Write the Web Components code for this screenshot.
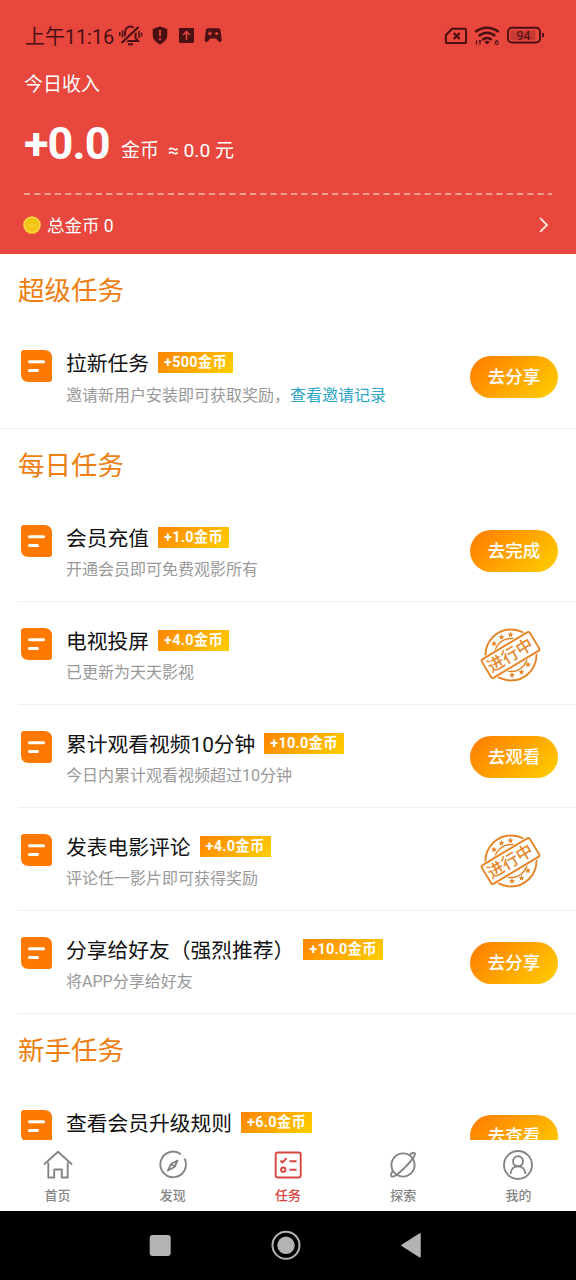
<!DOCTYPE html>
<html lang="zh-CN">
<head>
<meta charset="utf-8">
<title>任务</title>
<style>
html,body{margin:0;height:1280px;overflow:hidden;background:#fff}
body{font-family:Roboto,"Noto Sans CJK SC",sans-serif}
</style>
</head>
<body>
<task-app></task-app>
<script>
const define = (name, render) => customElements.define(name, class extends HTMLElement {
  connectedCallback() {
    if (this.shadowRoot) return;
    const t = document.createElement('template');
    t.innerHTML = render(this);
    this.attachShadow({ mode: 'open' }).append(t.content.cloneNode(true));
  }
});

define('status-bar', () => `
<style>
:host{display:flex;box-sizing:border-box;height:62px;padding:11px 31px 0 25px;color:#4a1013;font-size:20px;justify-content:space-between}
div{display:flex;align-items:center;height:50px}
span{line-height:50px;width:94px;white-space:nowrap;padding-top:2px;letter-spacing:-.1px}
svg{display:block;flex:none}
</style>
<div><span>上午11:16</span>
<svg width="106" height="24" viewBox="119 24 106 24" fill="none" stroke="currentColor" stroke-width="2">
<path d="M124 41h14l-2.5-3v-5c0-3.600-2-6.500-5-6.500s-5.500 2.500-5.500 6.500v5z"/>
<path d="M121 43.500 139 26" stroke="#e8473d" stroke-width="5"/><path d="M121.500 43 138.500 27" stroke-width="2.200"/>
<path d="M128 44.300h5" stroke-width="2"/><path d="M119.800 32v4M122.500 30.500v7M139 31v7M141.500 32.500v4" stroke-width="1.500"/>
<path d="M160 26.200l7.300 2.700v5.500c0 5-3.200 8-7.300 10-4.100-2-7.300-5-7.300-10v-5.500z" fill="currentColor" stroke="none"/><path d="M160 30v6.200M160 38v2.200" stroke="#e8473d" stroke-width="1.700"/>
<rect x="179" y="28" width="15" height="15" rx="1" fill="currentColor" stroke="none"/><path d="M186.500 40v-8.500M183 35l3.500-3.500 3.500 3.500" stroke="#e8473d" stroke-width="1.500"/>
<path d="M208 28.200h10.500q1.700 0 2 1.700l1.200 9.500c.3 2.500-2 3-3 2l-2.700-2.900h-5.600l-2.700 2.900c-1 1-3.300.5-3-2l1.200-9.500q.3-1.700 2.100-1.700z" fill="currentColor" stroke="none"/><path d="M208 33.500h4M210 31.500v4" stroke="#e8473d" stroke-width="1.300"/><circle cx="216.700" cy="33.500" r="1.600" fill="#e8473d" stroke="none"/>
</svg></div>
<div><svg width="102" height="24" viewBox="443 24 102 24" fill="none" stroke="currentColor" stroke-width="2">
<path d="M452 28.800h12.500q1.600 0 1.600 1.600v11q0 1.600-1.600 1.600h-17q-1.600 0-1.600-1.600v-6.200z"/><path d="M453.700 33l6 6M459.700 33l-6 6" stroke-width="2.300"/>
<path d="M475.300 32c7-5.800 16.400-5.800 23.400 0M478.800 36c5-4.300 11.400-4.300 16.400 0M482.300 39.800c3-2.400 6.400-2.400 9.400 0" stroke-width="2.500"/><path d="M484.300 41.700q2.700-1.800 5.400 0l-2.700 2.800z" fill="currentColor" stroke="none"/><path d="M476.500 44.500v-4M480 40v4.500M478.500 41h3" stroke-width="1.200"/>
<text x="494.300" y="45" fill="currentColor" stroke="none" font-size="8" font-weight="700">6</text>
<rect x="508" y="27.800" width="32" height="14.700" rx="4" stroke-width="1.900"/><rect x="510.500" y="30.500" width="25" height="9.500" rx="1" fill="#b5322e" stroke="none" opacity=".65"/><path d="M543 33v4" stroke-width="2"/>
<text x="516.500" y="40" fill="currentColor" stroke="none" font-size="12.500">94</text>
</svg></div>`);

define('income-header', () => `
<style>
:host{display:block;height:254px;background:#e8473d;color:#fff}
.body{padding:8px 24px 0}
.label{font-size:19px;line-height:30px;height:30px}
.amount{display:flex;align-items:baseline;height:66px;margin-top:12px;white-space:nowrap}
.amount b{font-size:45px;line-height:64px;width:97px;letter-spacing:-.9px}
.amount span,.amount i{font-size:19px;transform:translateY(-2px)}
.amount span{width:47px}
.amount i{font-style:normal;font-size:19.200px}
svg{display:block}
.dash{margin-top:15px}
.total{display:flex;align-items:center;height:30px;margin:14.500px 0 0 -1px;font-size:17.500px;gap:6px}
.total span{flex:1}
.arrow{margin-right:3px}
</style>
<status-bar></status-bar>
<div class="body">
<div class="label">今日收入</div>
<div class="amount"><b>+0.0</b><span>金币</span><i>≈ 0.0 元</i></div>
<svg class="dash" width="528" height="2"><path d="M0 1h528" stroke="#f8bcae" stroke-width="1.500" stroke-dasharray="6.200 4.070"/></svg>
<div class="total"><svg width="18" height="18"><circle cx="9" cy="9" r="8.800" fill="#fbd13c"/><circle cx="9" cy="9" r="6.300" fill="#f3c514" stroke="#e0b21c" stroke-width=".8" stroke-dasharray="1.500 1"/><path d="M6 8l3 3 3-3" fill="none" stroke="#f9d84c"/></svg><span>总金币 0</span>
<svg class="arrow" width="10" height="16" fill="none" stroke="#ffe9e4" stroke-width="1.800"><path d="M1.200 1.200 8 8l-6.800 6.800"/></svg></div>
</div>`);

define('task-section', el => `
<style>
:host{display:block}
h2{box-sizing:border-box;margin:0;padding:1.500px 0 0 18px;height:70px;line-height:70px;font-size:26.500px;font-weight:400;color:#ef7e11}
</style>
<h2>${el.getAttribute('heading')}</h2><slot></slot>`);

define('reward-badge', () => `
<style>
:host{display:block;box-sizing:border-box;height:21px;line-height:22px;padding:0 6px;background:linear-gradient(135deg,#ff8400,#ffcf00);color:#fff;font-size:14.400px;font-weight:700;letter-spacing:.3px;white-space:nowrap}
</style><slot></slot>`);

define('pill-button', () => `
<style>
:host{display:block;width:88px;height:42px;line-height:43px;border-radius:21px;background:linear-gradient(135deg,#ff7a00,#ffcf00);color:#fff;font-size:17.500px;font-weight:500;text-align:center}
</style><slot></slot>`);

define('progress-stamp', () => `
<style>:host{display:block;width:60px;height:56px;margin-right:17px}svg{display:block;overflow:visible}</style>
<svg width="60" height="56" viewBox="-30 -28 60 56" fill="none" stroke="#e58528">
<circle r="25.500" stroke-width="1.900"/><circle r="16.500" stroke-width="1.500"/>
${[[-17,-11.500],[-9.500,-18],[-.5,-20.500],[17,9.500],[10.500,17],[1,20]].map(([x,y]) => `<path transform="translate(${x} ${y}) scale(.85)" fill="#e58528" stroke="none" d="M0-3.500 1-1.100 3.500-1 1.600.700 2.200 3.200 0 1.800-2.200 3.200-1.600.700-3.500-1-1-1.100z"/>`).join('')}
<g transform="translate(-.5 0) rotate(-31)"><rect x="-29" y="-12.500" width="58" height="25" fill="#fff" stroke="none"/><rect x="-28" y="-10.800" width="56" height="21.600" rx="2" fill="#fff" stroke-width="1.900"/>
<text x="-.5" y="5.800" text-anchor="middle" font-size="16.500" font-weight="500" fill="#e58528" stroke="none">进行中</text></g>
</svg>`);

define('task-row', el => `
<style>
:host{display:flex;box-sizing:border-box;height:103px;margin-left:18px;padding:0 18px 0 3px;border-bottom:1px solid #efefef}
:host([full]){height:105px;margin-left:0;padding-left:21px}
.icon{display:block;margin-top:26px;flex:none}
.text{flex:1;padding-left:14px}
.title{display:flex;align-items:center;height:30px;margin-top:24.500px;gap:9px;font-size:20.750px;line-height:30px;color:#111;white-space:nowrap}
.sub{font-size:16px;line-height:24px;margin-top:4px;color:#999;white-space:nowrap}
:host([full]) .sub{margin-top:5px}
.action{margin-top:31px}
:host([full]) .action{margin-top:32px}
reward-badge{margin-top:-3px}
progress-stamp{margin-top:-6.500px}
</style>
<svg class="icon" width="31" height="32"><path d="M3 0H23Q31 0 31 8V29Q31 32 28 32H8Q0 32 0 24V3Q0 0 3 0Z" fill="#ff7800"/><path d="M8.500 11.700h14M8.500 20.500h8" stroke="#fff" stroke-width="3" stroke-linecap="round"/></svg>
<div class="text"><div class="title"><span>${el.getAttribute('name')}</span><reward-badge>${el.getAttribute('reward')}金币</reward-badge></div><div class="sub"><slot></slot></div></div>
<div class="action">${el.hasAttribute('action') ? `<pill-button>${el.getAttribute('action')}</pill-button>` : '<progress-stamp></progress-stamp>'}</div>`);

const navIcons = {
  home: '<path d="M2 15.500 16 2.800l14 12.700M6.300 13.500v15h5.900v-8h7.600v8h5.900v-15"/>',
  compass: '<path d="M24 5.300A12.800 12.800 0 1 0 27.500 9.500M25.700 6.900l.3.300"/><path d="M20.500 11.500 17.500 18l-6.500 3.500 3-6.500zM14.500 15.500l3 2"/>',
  tasks: '<rect x="3.700" y="3.500" width="25" height="25" rx="2"/><path d="M8.500 11.500l2 2 4-4.300M17.500 12.300h7M17.500 20.700h7"/><circle cx="11.300" cy="20.700" r="2.200"/>',
  planet: '<circle cx="16" cy="16" r="11.600"/><path d="M22 6.200c2.500-2.200 5-2.900 5.500-2.300.9.900.2 2.700-1 4.500-2.300 3.500-6 7.500-9.300 10.800-4 3.800-10.700 9.600-12.600 8.300-1-.9-.3-3.300 1-5.500"/>',
  person: '<circle cx="16" cy="16" r="14"/><circle cx="16" cy="12.200" r="5"/><path d="M8.500 25c.3-4.700 3.200-7.700 7.500-7.700s7.200 3 7.500 7.700"/>'
};
define('nav-item', el => `
<style>
:host{display:flex;flex-direction:column;align-items:center;flex:1;color:#858585;font-size:13px;font-weight:500}
:host([active]){color:#d8453f}
svg{display:block;margin-top:9px}
span{line-height:20px;margin-top:5px}
</style>
<svg width="32" height="32" fill="none" stroke="currentColor" stroke-width="1.900" stroke-linejoin="round">${navIcons[el.getAttribute('icon')]}</svg><span><slot></slot></span>`);

define('system-nav', () => `
<style>:host{display:block;height:69px;background:#000}svg{display:block}</style>
<svg width="576" height="69"><rect x="149.700" y="24" width="21" height="21" rx="3" fill="#b3b3b3"/><circle cx="286" cy="34.300" r="13.500" fill="none" stroke="#b3b3b3" stroke-width="2"/><circle cx="286" cy="34.300" r="8.700" fill="#b3b3b3"/><path d="M402 34.300 420 23v22.800z" fill="#b3b3b3" stroke="#b3b3b3" stroke-width="1.500" stroke-linejoin="round"/></svg>`);

define('task-app', () => `
<style>
:host{display:flex;flex-direction:column;width:576px;height:1280px;background:#fff}
income-header,nav,system-nav{flex:none}
main{flex:1;min-height:0;overflow:hidden}
nav{display:flex;height:71px;background:#fff}
a{color:#2da5c5}
</style>
<income-header></income-header>
<main>
<task-section heading="超级任务"><task-row full name="拉新任务" reward="+500" action="去分享">邀请新用户安装即可获取奖励，<a>查看邀请记录</a></task-row></task-section>
<task-section heading="每日任务">
<task-row name="会员充值" reward="+1.0" action="去完成">开通会员即可免费观影所有</task-row>
<task-row name="电视投屏" reward="+4.0">已更新为天天影视</task-row>
<task-row name="累计观看视频10分钟" reward="+10.0" action="去观看">今日内累计观看视频超过10分钟</task-row>
<task-row name="发表电影评论" reward="+4.0">评论任一影片即可获得奖励</task-row>
<task-row name="分享给好友（强烈推荐）" reward="+10.0" action="去分享">将APP分享给好友</task-row>
</task-section>
<task-section heading="新手任务"><task-row name="查看会员升级规则" reward="+6.0" action="去查看"></task-row></task-section>
</main>
<nav><nav-item icon="home">首页</nav-item><nav-item icon="compass">发现</nav-item><nav-item icon="tasks" active>任务</nav-item><nav-item icon="planet">探索</nav-item><nav-item icon="person">我的</nav-item></nav>
<system-nav></system-nav>`);
</script>
</body>
</html>
